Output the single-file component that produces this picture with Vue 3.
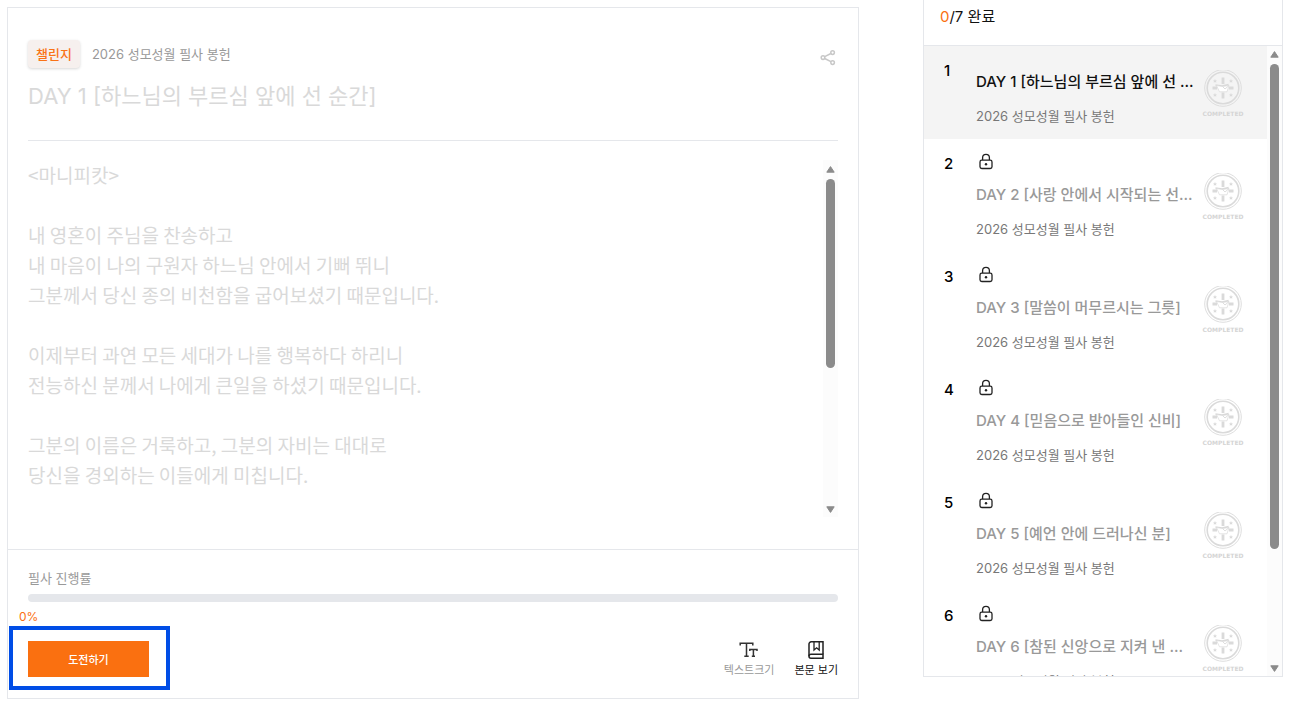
<template>
  <div class="page">
    <main class="challenge-card">
      <header class="challenge-header">
        <div class="header-top">
          <span class="tag">챌린지</span>
          <span class="challenge-name">{{ challengeName }}</span>
          <button class="share-button" type="button" aria-label="공유하기">
            <svg width="16" height="16" viewBox="0 0 16 16" fill="none" stroke="#c8c8c8" stroke-width="1.5">
              <circle cx="3" cy="7.6" r="1.8" />
              <circle cx="12.6" cy="2.6" r="1.8" />
              <circle cx="12.6" cy="12.6" r="1.8" />
              <path d="M4.7 6.7L10.9 3.5M4.7 8.5L10.9 11.7" />
            </svg>
          </button>
        </div>
        <h1>DAY 1 [하느님의 부르심 앞에 선 순간]</h1>
      </header>

      <div class="passage">
        <div class="passage-text">
          <p v-for="(line, i) in passage" :key="i">{{ line }}</p>
        </div>
        <div class="scrollbar">
          <svg width="9" height="7" viewBox="0 0 9 7"><path d="M4.5 0.6L8.2 6.2H0.8Z" /></svg>
          <div class="track"><div class="thumb passage-thumb"></div></div>
          <svg width="9" height="7" viewBox="0 0 9 7"><path d="M4.5 6.4L0.8 0.8H8.2Z" /></svg>
        </div>
      </div>

      <footer class="challenge-footer">
        <div class="progress-label">필사 진행률</div>
        <div class="progress-bar">
          <div class="progress-fill" :style="{ width: progress + '%' }"></div>
        </div>
        <div class="progress-value">{{ progress }}%</div>
        <div class="actions">
          <div class="start-wrap">
            <button class="start-button" type="button">도전하기</button>
            <div class="highlight"></div>
          </div>
          <div class="tools">
            <button class="tool-button muted" type="button">
              <svg width="20" height="20" viewBox="0 0 20 20" fill="none" stroke="#333" stroke-width="1.5">
                <path d="M1.2 5.5V3.2H13.8V5.5M7.5 3.2V16.2M5.3 16.3H9.7" />
                <path d="M10.8 11V9.4H18V11M14.4 9.4V16.2M12.8 16.3H16" />
              </svg>
              텍스트크기
            </button>
            <button class="tool-button" type="button">
              <svg width="20" height="20" viewBox="0 0 20 20" fill="none" stroke="#222" stroke-width="1.5">
                <path d="M17 14.2V1.8H5.2A2.2 2.2 0 0 0 3 4V16.2" />
                <path d="M17 14.2H5A2 2 0 0 0 5 18.2H17Z" />
                <path d="M8 1.8V10L10.6 7.8L13.2 10V1.8" stroke-width="1.3" />
              </svg>
              본문 보기
            </button>
          </div>
        </div>
      </footer>
    </main>

    <aside class="day-panel">
      <div class="panel-header"><strong>0</strong>/7 완료</div>
      <div class="panel-body">
        <ol class="day-list">
          <li v-for="day in days" :key="day.no" class="day-item" :class="{ active: !day.locked }">
            <span class="day-no">{{ day.no }}</span>
            <div class="day-info">
              <div v-if="day.locked" class="lock">
                <svg width="20" height="20" viewBox="0 0 20 20" fill="none" stroke="#222" stroke-width="1.3">
                  <rect x="4" y="7.1" width="12" height="8.4" rx="1.8" />
                  <path d="M6.6 7.1V4.8A3.4 3.4 0 0 1 13.4 4.8V7.1" />
                  <circle cx="10" cy="11.2" r="1.2" fill="#222" stroke="none" />
                </svg>
              </div>
              <div class="day-title">{{ day.title }}</div>
              <div class="day-sub">{{ challengeName }}</div>
            </div>
            <svg class="medal" width="44" height="48" viewBox="0 1 44 48">
              <g fill="none" stroke="#dadada">
                <circle cx="22" cy="19" r="18.3" stroke-width="0.9" />
                <circle cx="22" cy="19" r="15.8" stroke-width="1.6" />
              </g>
              <g fill="#dadada">
                <path d="M20.6 8.5H23.4V15H20.6ZM20.6 23.5H23.4V29.5H20.6ZM11.5 17.6H16V20.4H11.5ZM28 17.6H32.5V20.4H28Z" />
                <path
                  v-for="(s, i) in stars"
                  :key="i"
                  :d="`M${s[0]} ${s[1] - 2}L${s[0] + 0.7} ${s[1] - 0.6}L${s[0] + 2} ${s[1] - 0.5}L${s[0] + 1} ${s[1] + 0.5}L${s[0] + 1.3} ${s[1] + 1.8}L${s[0]} ${s[1] + 1.1}L${s[0] - 1.3} ${s[1] + 1.8}L${s[0] - 1} ${s[1] + 0.5}L${s[0] - 2} ${s[1] - 0.5}L${s[0] - 0.7} ${s[1] - 0.6}Z`"
                />
                <path d="M14.5 15.2L21 16.2L27.6 14.8V16.6L21.4 18L14.5 17Z" />
              </g>
              <path d="M15.5 16.5L21.5 17.5L28 16.5L26 22.8H18.5Z" fill="#fff" stroke="#dadada" stroke-width="0.7" />
              <path d="M21.5 17.5L24 20L28 16.5" fill="none" stroke="#dadada" stroke-width="0.9" />
              <text x="22" y="47" text-anchor="middle">COMPLETED</text>
            </svg>
          </li>
        </ol>
        <div class="scrollbar">
          <svg width="9" height="7" viewBox="0 0 9 7"><path d="M4.5 0.6L8.2 6.2H0.8Z" /></svg>
          <div class="track"><div class="thumb list-thumb"></div></div>
          <svg width="9" height="7" viewBox="0 0 9 7"><path d="M4.5 6.4L0.8 0.8H8.2Z" /></svg>
        </div>
      </div>
    </aside>
  </div>
</template>

<script setup>
import { ref } from 'vue'

const challengeName = '2026 성모성월 필사 봉헌'
const progress = ref(0)

const passage = [
  '<마니피캇>',
  '',
  '내 영혼이 주님을 찬송하고',
  '내 마음이 나의 구원자 하느님 안에서 기뻐 뛰니',
  '그분께서 당신 종의 비천함을 굽어보셨기 때문입니다.',
  '',
  '이제부터 과연 모든 세대가 나를 행복하다 하리니',
  '전능하신 분께서 나에게 큰일을 하셨기 때문입니다.',
  '',
  '그분의 이름은 거룩하고, 그분의 자비는 대대로',
  '당신을 경외하는 이들에게 미칩니다.'
]

const days = ref([
  { no: 1, title: 'DAY 1 [하느님의 부르심 앞에 선 ...', locked: false },
  { no: 2, title: 'DAY 2 [사랑 안에서 시작되는 선...', locked: true },
  { no: 3, title: 'DAY 3 [말씀이 머무르시는 그릇]', locked: true },
  { no: 4, title: 'DAY 4 [믿음으로 받아들인 신비]', locked: true },
  { no: 5, title: 'DAY 5 [예언 안에 드러나신 분]', locked: true },
  { no: 6, title: 'DAY 6 [참된 신앙으로 지켜 낸 ...', locked: true }
])

// star centres around the cross on the medal
const stars = [
  [14, 12],
  [30, 12],
  [14, 26],
  [30, 26]
]
</script>

<style>
body {
  margin: 0;
  background: #fff;
}
</style>

<style scoped>
.page {
  display: grid;
  grid-template-columns: minmax(0, 1fr) 360px;
  gap: 64px;
  align-items: start;
  height: 100vh;
  padding: 0 8px 0 7px;
  box-sizing: border-box;
  overflow: hidden;
  font-family: Inter, "Noto Sans CJK KR", sans-serif;
  color: #111;
}

button {
  padding: 0;
  border: none;
  background: none;
  font-family: inherit;
  cursor: pointer;
}

.challenge-card {
  display: flex;
  flex-direction: column;
  height: calc(100vh - 14px);
  margin-top: 7px;
  box-sizing: border-box;
  border: 1px solid #e5e7eb;
}

.challenge-header {
  margin: 0 20px;
  padding: 32px 0 28px;
  border-bottom: 1px solid #e5e7eb;
}

.header-top {
  display: flex;
  align-items: center;
  height: 28px;
}

.tag {
  padding: 0 8px;
  border-radius: 4px;
  background: #f6f0ee;
  box-shadow: 0 1px 3px rgba(0, 0, 0, 0.16);
  color: #f97316;
  font-size: 13px;
  font-weight: 500;
  line-height: 28px;
}

.challenge-name {
  margin-left: 12px;
  color: #999;
  font-size: 13px;
  line-height: 28px;
}

.share-button {
  display: flex;
  align-items: flex-end;
  height: 24px;
  margin-left: auto;
  padding-right: 2px;
}

.share-button svg {
  display: block;
}

h1 {
  margin: 12px 0 0;
  color: #d9d9d9;
  font-size: 22px;
  font-weight: 400;
  line-height: 32px;
}

.passage {
  display: flex;
  flex: 1;
  min-height: 0;
  margin: 19px 20px 32px;
}

.passage-text {
  flex: 1;
  overflow-y: auto;
  scrollbar-width: none;
  color: #d9d9d9;
  font-family: "Noto Sans CJK KR", sans-serif;
  font-size: 19px;
  line-height: 30px;
}

.passage-text p {
  min-height: 30px;
  margin: 0;
}

.scrollbar {
  display: flex;
  flex-direction: column;
  align-items: center;
  width: 15px;
  padding: 5px 0 4px;
  box-sizing: border-box;
  background: #fcfcfc;
}

.passage .scrollbar {
  padding-top: 6px;
}

.scrollbar svg {
  flex: none;
  fill: #8b8b8b;
  stroke: #8b8b8b;
  stroke-linejoin: round;
}

.track {
  flex: 1;
  width: 9px;
  margin: 6px 0;
}

.thumb {
  border-radius: 5px;
  background: #8b8b8b;
}

.passage-thumb {
  height: 59%;
}

.list-thumb {
  height: 81.5%;
}

.challenge-footer {
  padding: 18px 20px 21px;
  border-top: 1px solid #e5e7eb;
}

.progress-label {
  color: #999;
  font-size: 13px;
  line-height: 20px;
}

.progress-bar {
  height: 8px;
  margin-top: 6px;
  border-radius: 4px;
  background: #e5e7eb;
  overflow: hidden;
}

.progress-fill {
  height: 100%;
  background: #fa7010;
}

.progress-value {
  margin: 7px 0 16px -9px;
  color: #fa7010;
  font-size: 12px;
  line-height: 16px;
}

.actions {
  display: flex;
  align-items: flex-end;
  justify-content: space-between;
  height: 36px;
}

.start-wrap {
  position: relative;
}

.start-button {
  display: block;
  width: 121px;
  height: 36px;
  background: #fa7010;
  color: #fff;
  font-size: 11px;
  font-weight: 500;
}

.highlight {
  position: absolute;
  inset: -15px -21px -13px -19px;
  border: 4px solid #004de6;
  pointer-events: none;
}

.tools {
  display: flex;
  gap: 20px;
}

.tool-button {
  display: flex;
  flex-direction: column;
  align-items: center;
  gap: 3px;
  color: #111;
  font-size: 11px;
  line-height: 14px;
}

.tool-button.muted {
  color: #999;
}

.day-panel {
  display: flex;
  flex-direction: column;
  height: calc(100vh - 29px);
  box-sizing: border-box;
  border: 1px solid #e5e7eb;
  border-top: none;
}

.panel-header {
  padding: 5px 16px 16px;
  border-bottom: 1px solid #e5e7eb;
  font-size: 15px;
  line-height: 24px;
}

.panel-header strong {
  color: #fa7010;
  font-weight: 400;
}

.panel-body {
  display: flex;
  flex: 1;
  min-height: 0;
}

.day-list {
  flex: 1;
  min-width: 0;
  margin: 0;
  padding: 0;
  list-style: none;
  overflow-y: auto;
  scrollbar-width: none;
}

.day-item {
  display: flex;
  align-items: center;
  padding: 14px 22px 11px 20px;
}

.day-item.active {
  background: #f4f4f4;
}

.day-no {
  align-self: flex-start;
  width: 32px;
  color: #000;
  font-size: 15px;
  font-weight: 500;
  line-height: 22px;
}

.day-info {
  flex: 1;
  min-width: 0;
}

.lock {
  height: 20px;
}

.lock svg {
  display: block;
}

.day-title {
  color: #999;
  font-size: 15px;
  font-weight: 500;
  line-height: 44px;
  white-space: nowrap;
}

.active .day-title {
  color: #111;
}

.day-sub {
  color: #777;
  font-size: 13px;
  line-height: 24px;
}

.medal {
  flex: none;
}

.medal text {
  fill: #d4d4d4;
  font-family: "DejaVu Sans", sans-serif;
  font-size: 6px;
  font-weight: 700;
}
</style>
